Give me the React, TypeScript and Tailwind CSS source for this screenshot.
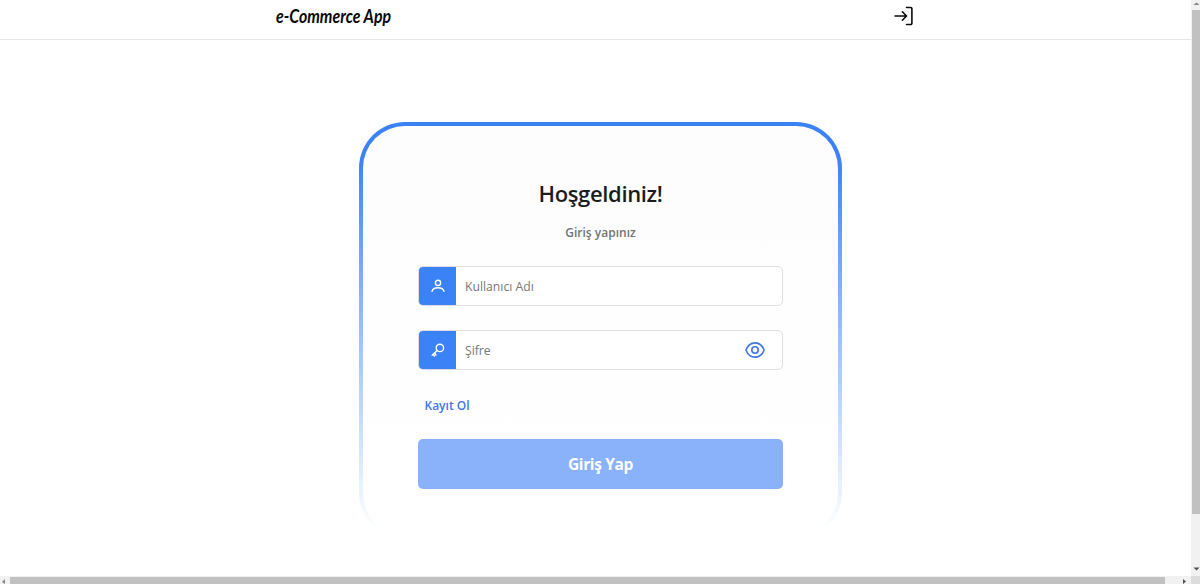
import type { ReactNode } from "react";

function LogInIcon() {
  return (
    <svg width="19" height="20" viewBox="0 0 19 20" fill="none" stroke="#0a0a0a" strokeWidth="1.6" strokeLinecap="round" strokeLinejoin="round">
      <path d="M12.500 1.500h4.200a1.200 1.200 0 0 1 1.200 1.200v14.600a1.200 1.200 0 0 1-1.200 1.200h-4.200" />
      <path d="M1 10h11.200M8.400 5.800l4.100 4.200-4.100 4.200" />
    </svg>
  );
}

function UserIcon() {
  return (
    <svg width="14" height="14" viewBox="0 0 14 14" fill="none" stroke="white" strokeWidth="1.4" strokeLinecap="round">
      <circle cx="7" cy="3.900" r="2.600" />
      <path d="M1 12.400c.5-2.300 2.800-3.700 6-3.700s5.500 1.400 6 3.700" />
    </svg>
  );
}

function KeyIcon() {
  return (
    <svg width="14" height="14" viewBox="0 0 14 14" fill="none" stroke="white" strokeWidth="1.4" strokeLinecap="round" strokeLinejoin="round">
      <circle cx="8.900" cy="4.900" r="3.700" />
      <path d="M6.200 7.600 1.200 12.300M3.500 10.300l1.500 1.700M1.900 11.200l1.600 1.700" />
    </svg>
  );
}

function EyeIcon() {
  return (
    <svg width="20" height="16" viewBox="0 0 20 16" fill="none" stroke="#4277e0" strokeWidth="1.6" strokeLinejoin="round">
      <path d="M.9 8C2.700 3.400 6 .9 10 .9S17.300 3.400 19.100 8c-1.800 4.600-5.100 7.100-9.100 7.100S2.700 12.600.9 8Z" />
      <circle cx="10" cy="8" r="3.200" />
    </svg>
  );
}

function Field({ icon, label, type, action }: { icon: ReactNode; label: string; type: string; action?: ReactNode }) {
  return (
    <div className="flex h-10 w-[365px] overflow-hidden rounded-[5px] border border-[#dedfe2] bg-white">
      <span className="-my-px -ml-px flex w-[38px] shrink-0 items-center justify-center bg-[#3b82f6] pl-px">{icon}</span>
      <input
        type={type}
        placeholder={label}
        className="min-w-0 flex-1 bg-transparent px-[9px] pt-[2px] text-[12.2px] text-[#6b7280] outline-none placeholder:text-[#75787d]"
      />
      {action && <button className="mr-[17px] flex items-center">{action}</button>}
    </div>
  );
}

export default function App() {
  return (
    <div className="flex h-[584px] w-[1200px] flex-col overflow-hidden bg-white font-['Open_Sans','Noto_Sans',sans-serif]">
      <div className="flex min-h-0 flex-1">
        <div className="flex flex-1 flex-col">
          <header className="flex h-10 shrink-0 justify-between border-b border-[#e7e7e8] pr-[278px] pl-[276px]">
            <div className="w-[116px] pt-[5px]">
              <span className="block w-max origin-left scale-x-[0.885] font-['Lato',cursive] text-[18px] leading-[22px] font-bold text-[#090909] italic">
                e-Commerce App
              </span>
            </div>
            <button className="flex h-8 items-center">
              <LogInIcon />
            </button>
          </header>
          <main className="flex flex-col items-start pt-[82px] pl-[359px]">
            <div className="h-[417px] w-[483px] rounded-[46px] bg-linear-to-b from-[#3b82f6] from-8% to-white to-98% p-1">
              <div className="flex h-full w-full flex-col items-center rounded-[42px] bg-linear-to-b from-[#fdfdfd] to-white pt-[50px]">
                <h1 className="text-[22px] leading-[34px] font-semibold tracking-[-0.35px] text-[#1c1c1c]">Hoşgeldiniz!</h1>
                <p className="mt-[14px] text-[12px] leading-[18px] font-semibold text-[#737373]">Giriş yapınız</p>
                <form className="mt-[24px] flex w-[365px] flex-col">
                  <Field icon={<UserIcon />} label="Kullanıcı Adı" type="text" />
                  <div className="h-6" />
                  <Field icon={<KeyIcon />} label="Şifre" type="password" action={<EyeIcon />} />
                  <a className="mt-[27px] ml-[6.500px] self-start text-[12px] leading-[18px] font-semibold text-[#4277e8]">Kayıt Ol</a>
                  <button type="button" className="mt-[24px] h-[50px] rounded-[5px] bg-[#89b2fa] pt-[2px] text-[15.5px] font-bold tracking-[-0.35px] text-white">
                    Giriş Yap
                  </button>
                </form>
              </div>
            </div>
          </main>
        </div>
        <div className="flex w-[9px] shrink-0 flex-col items-center bg-[#f1f1f1]">
          <svg className="h-[10px] w-[9px] shrink-0" viewBox="0 0 9 10">
            <path d="M2.500 5h6L5.500 2.500Z" fill="#858585" />
          </svg>
          <div className="h-[504px] w-[8px] shrink-0 self-end bg-[#c1c1c1]" />
          <div className="flex-1" />
          <svg className="h-[10px] w-[9px] shrink-0" viewBox="0 0 9 10">
            <path d="M2.500 1.500h6L5.500 4.500Z" fill="#505050" />
          </svg>
        </div>
      </div>
      <div className="flex h-2 shrink-0 bg-[#f1f1f1]">
        <svg className="h-2 w-[10px]" viewBox="0 0 10 8">
          <path d="M5 3v5L2 6Z" fill="#858585" />
        </svg>
        <div className="mt-px h-[7px] w-[1155px] bg-[#c1c1c1]" />
        <div className="flex-1" />
        <svg className="h-2 w-[10px]" viewBox="0 0 10 8">
          <path d="M2 3v5l3-2.500Z" fill="#505050" />
        </svg>
        <div className="w-[9px] bg-[#dcdcdc]" />
      </div>
    </div>
  );
}
